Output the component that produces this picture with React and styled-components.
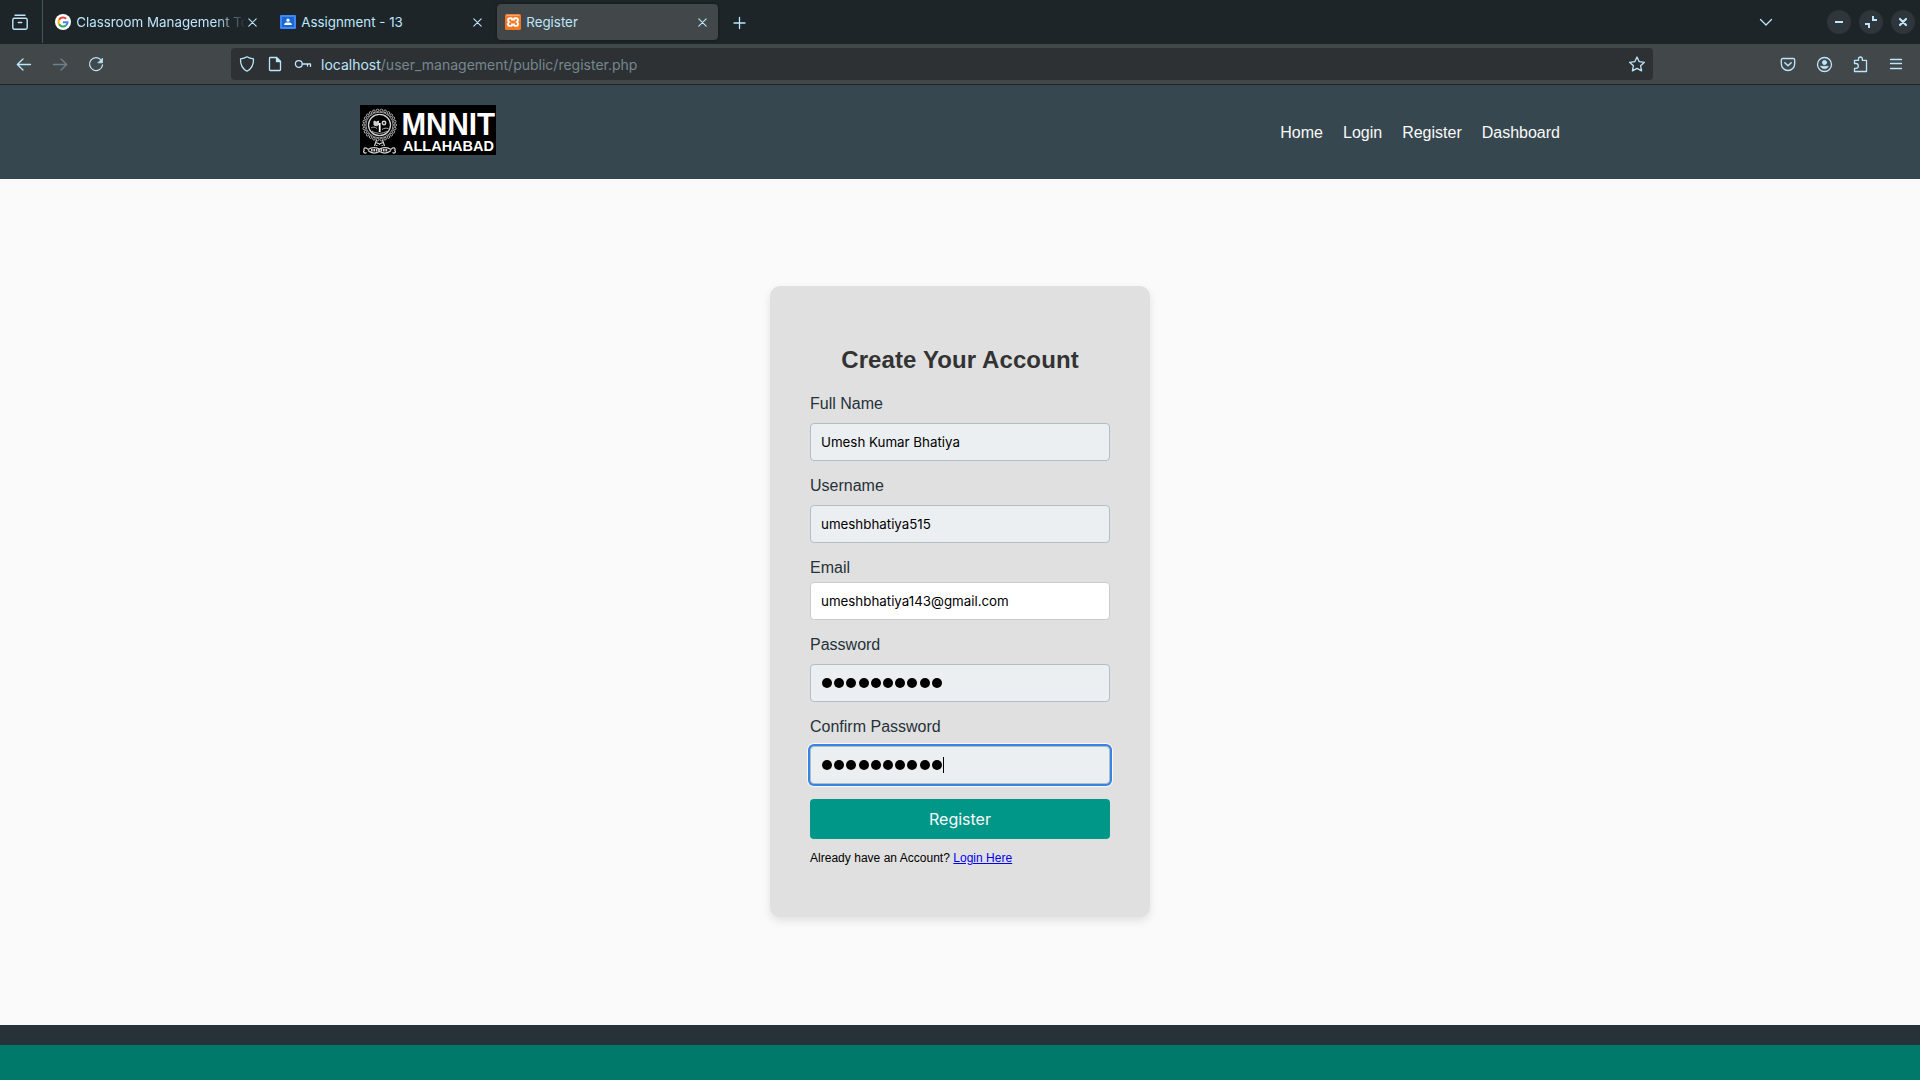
import React from "react";
import styled, { createGlobalStyle, css } from "styled-components";

const ICE = "#bde6fb";

const Global = createGlobalStyle`
  *, *::before, *::after { box-sizing: border-box; }
  html, body, #root { height: 100%; }
  body { margin: 0; overflow: hidden; background: #fafafa; font-family: "Liberation Sans", Arial, sans-serif; }
`;

const Window = styled.div`
  display: flex;
  flex-direction: column;
  width: 1920px;
  height: 1080px;
`;

const TabStrip = styled.div`
  display: flex;
  align-items: center;
  height: 44px;
  flex: none;
  background: #1e2529;
  font-family: Inter, sans-serif;
`;
const ViewButton = styled.div`
  display: flex;
  align-items: center;
  width: 43px;
  height: 43px;
  margin-bottom: 1px;
  padding-left: 12px;
  border-right: 1px solid #43555e;
`;
const Tabs = styled.div`
  display: flex;
  gap: 4px;
  margin-left: 4px;
`;
const Tab = styled.div`
  display: flex;
  align-items: center;
  width: 221px;
  height: 36px;
  padding: 0 11.5px 0 8px;
  border-radius: 4px;
  background: ${(p) => (p.$active ? "#42474a" : "transparent")};
  box-shadow: ${(p) => (p.$active ? "0 0 3px rgba(0,0,0,.5)" : "none")};
`;
const TabTitle = styled.span`
  flex: 1;
  min-width: 0;
  margin-left: 5.3px;
  white-space: nowrap;
  font-size: 13.33px;
  line-height: 20px;
  color: ${ICE};
  ${(p) =>
    p.$fade &&
    css`
      mask-image: linear-gradient(to left, transparent 2px, #000 32px);
    `}
`;
const NewTab = styled.div`
  display: flex;
  margin-left: 13px;
  padding-top: 1px;
`;
const WindowControls = styled.div`
  display: flex;
  align-items: center;
  gap: 8px;
  margin-left: auto;
  padding-right: 5px;
`;
const TabList = styled.div`
  display: flex;
  margin-right: 45px;
`;
const RoundButton = styled.div`
  display: grid;
  place-items: center;
  width: 24px;
  height: 24px;
  border-radius: 50%;
  background: #2e353b;
`;

const Toolbar = styled.div`
  display: flex;
  align-items: center;
  flex: none;
  height: 41px;
  padding: 0 14px;
  background: #42474a;
  border-bottom: 1px solid #1e2529;
`;
const NavButtons = styled.div`
  display: flex;
  gap: 16px;
  width: 217px;
`;
const UrlBar = styled.div`
  display: flex;
  align-items: center;
  width: 1422px;
  height: 32px;
  padding: 0 6px;
  gap: 8px;
  border-radius: 4px;
  background: #2d3134;
`;
const Url = styled.div`
  flex: 1;
  padding-top: 1px;
  font: 14px/20px Inter, sans-serif;
  color: #77878f;
`;
const Host = styled.span`
  color: ${ICE};
`;
const ToolButtons = styled.div`
  display: flex;
  gap: 16px;
  margin-left: auto;
`;

const Header = styled.header`
  flex: none;
  height: 94px;
  padding: 20px 0;
  background: #37474f;
`;
const HeaderInner = styled.div`
  display: flex;
  justify-content: space-between;
  width: 1200px;
  height: 54px;
  margin: 0 auto;
`;
const Menu = styled.nav`
  display: flex;
  align-items: center;
  gap: 20px;
  padding-top: 2px;
`;
const MenuLink = styled.a`
  font-size: 16px;
  line-height: 18px;
  color: #fafafa;
`;

const Main = styled.main`
  display: flex;
  flex: 1;
  align-items: flex-start;
  justify-content: center;
  padding-top: 107px;
  background: #fafafa;
`;
const Card = styled.section`
  width: 380px;
  height: 631px;
  padding: 40px;
  border-radius: 10px;
  background: #e0e0e0;
  box-shadow: 0 4px 8px rgba(0, 0, 0, 0.1);
`;
const Title = styled.h2`
  margin: 20px 0 22px;
  font-size: 24px;
  line-height: 27px;
  letter-spacing: 0.1px;
  text-align: center;
  color: #333;
`;
const Field = styled.div`
  margin-bottom: ${(p) => (p.$last ? 15 : 16)}px;
`;
const Label = styled.label`
  display: block;
  margin-bottom: ${(p) => (p.$tight ? 5 : 10)}px;
  font-size: 16px;
  line-height: 18px;
  color: #263238;
`;
const Input = styled.div`
  display: flex;
  align-items: center;
  height: 38px;
  padding: 0 10px;
  border: 1px solid ${(p) => (p.$plain ? "#ccc" : "#b0bec5")};
  border-radius: 4px;
  background: ${(p) => (p.$plain ? "#fff" : "#eceff1")};
  font: 13.33px/16px Inter, sans-serif;
  color: #000;
  ${(p) =>
    p.$focused &&
    css`
      box-shadow: 0 0 0 2px #3584e4, 0 0 0 3px rgba(255, 255, 255, 0.8);
    `}
`;
const Dots = styled.div`
  display: flex;
  gap: 2.19px;
  padding-left: 1px;
`;
const Dot = styled.i`
  width: 10px;
  height: 10px;
  border-radius: 50%;
  background: #000;
`;
const Caret = styled.i`
  width: 1px;
  height: 16px;
  margin-left: 1.3px;
  background: #000;
`;
const Submit = styled.button`
  display: block;
  width: 100%;
  height: 40px;
  padding: 0;
  border: 0;
  border-radius: 4px;
  background: #009688;
  font: 16px/20px Inter, sans-serif;
  color: #fafafa;
`;
const Hint = styled.p`
  margin: 12px 0 0;
  font-size: 12px;
  line-height: 14px;
  letter-spacing: 0.02px;
  color: #000;
`;
const HintLink = styled.a`
  color: #0000ee;
  text-decoration: underline;
`;
const FooterTop = styled.div`
  flex: none;
  height: 20px;
  background: #263238;
`;
const FooterBar = styled.footer`
  flex: none;
  height: 35px;
  background: #00796b;
`;

const IconSvg = styled.svg`
  flex: none;
  fill: none;
  stroke-linecap: round;
  stroke-linejoin: round;
`;
const Icon = ({ size = 20, w = 1.3, color = ICE, children }) => (
  <IconSvg width={size} height={size} viewBox={`0 0 ${size} ${size}`} stroke={color} strokeWidth={w}>
    {children}
  </IconSvg>
);

const ArchiveIcon = () => (
  <Icon size={16} w={1.4}>
    <path d="M3 1.2h10" />
    <rect x=".8" y="4.3" width="14.4" height="10.9" rx="1.6" />
    <path d="M6.3 8.5h3.4" />
  </Icon>
);
const CloseIcon = () => (
  <Icon size={9} w={1.1}>
    <path d="M.8.8l7.4 7.4M8.2.8.8 8.2" />
  </Icon>
);
const GoogleIcon = () => (
  <svg width="16" height="16" viewBox="0 0 16 16" fill="none" strokeWidth="2.1">
    <circle cx="8" cy="8" r="8" fill="#fff" />
    <path d="M4.1 5.75A4.5 4.5 0 0 1 11.2 4.8" stroke="#ea4335" />
    <path d="M4.1 5.75A4.5 4.5 0 0 0 4.1 10.25" stroke="#fbbc05" />
    <path d="M4.1 10.25A4.5 4.5 0 0 0 10.9 11.45" stroke="#34a853" />
    <path d="M10.9 11.45A4.5 4.5 0 0 0 12.5 8.2H8" stroke="#4285f4" />
  </svg>
);
const ClassroomIcon = () => (
  <svg width="16" height="16" viewBox="0 0 16 16">
    <rect y="1" width="16" height="14" rx="1" fill="#4285f4" />
    <rect x="2" y="3" width="12" height="10" fill="#1967d2" />
    <circle cx="8" cy="6.2" r="1.6" fill="#fff" />
    <path d="M4.2 11V10.3C4.2 8.9 6 8.5 8 8.5s3.8.4 3.8 1.8V11z" fill="#fff" />
  </svg>
);
const XamppIcon = () => (
  <svg width="16" height="16" viewBox="0 0 16 16" fill="none">
    <rect width="16" height="16" rx="1.5" fill="#f37623" />
    <path d="M1.5 1.3h13" stroke="#f9b384" strokeWidth="1" />
    <path
      d="M5 4.2c-1.3 0-2 .8-2 1.9 0 1 .5 1.5 1.1 1.9C3.4 8.4 3 9 3 10c0 1.2.8 1.9 2 1.9h1.2c.5 0 .8-.3.8-.8v-.6h2v.6c0 .5.3.8.8.8H11c1.2 0 2-.7 2-1.9 0-1-.4-1.6-1.1-2 .6-.4 1.1-.9 1.1-1.900 0-1.100-.7-1.900-2-1.900H9.800c-.5 0-.8.3-.8.8v.6H7V5c0-.5-.3-.8-.8-.8z"
      stroke="#fff"
      strokeWidth="1.9"
    />
  </svg>
);

const teeth = Array.from({ length: 26 }, (_, i) => {
  const a = (i * Math.PI) / 13;
  return [19.5 + 15.7 * Math.cos(a), 20 + 14.7 * Math.sin(a)];
});

const Logo = () => (
  <svg width="136" height="50" viewBox="0 0 136 50">
    <rect width="136" height="50" fill="#000" />
    <g fill="none" stroke="#d2d2d2">
      {teeth.map(([x, y], i) => (
        <circle key={i} cx={x} cy={y} r="1.3" strokeWidth=".8" />
      ))}
      <ellipse cx="19.5" cy="20" rx="13.6" ry="12.8" strokeWidth=".7" />
      <ellipse cx="19.5" cy="20" rx="11" ry="10.6" strokeWidth="1.3" />
      <path d="M11 23c2-1.500 4-1 6 .5M22 24.500c2-1.500 4-1.500 6.500-1M12 26c4 3 11 3 15 0" strokeWidth=".8" />
      <path d="M19.700 18v9" strokeWidth="1.800" stroke="#fff" />
      <path d="M14 16l2.300 1 2.200-1v4l-2.200.8L14 20z" fill="#cfcfcf" />
      <circle cx="24" cy="18" r="1.700" strokeWidth="1.500" />
      <path d="M16.500 35l-2 6M22.500 35l2 6M16 37.500l7 3M23 37.500l-7 3" strokeWidth="1.200" />
      <path d="M8 44.500c4-3 7-2.500 11.500-.5 4.500-2 7.500-2.500 11.500.5M8 45.500c4 3.500 8 3 11.500 1 3.500 2 7.500 2.500 11.500-1" strokeWidth="1.200" />
      <path d="M11 45.200h17" strokeWidth="2.600" strokeDasharray="1.600 .8" />
      <path d="M8 44.500c-2-3-5-1.500-3.800 1-1.700 1.200.3 3.500 2.300 2M31 44.500c2-3 5-1.500 3.800 1 1.700 1.200-.3 3.500-2.300 2" strokeWidth="1.200" />
    </g>
    <g fill="#fff" fontFamily="Liberation Sans, Arial, sans-serif" fontWeight="700">
      <text x="41.500" y="30" fontSize="31" textLength="93.500" lengthAdjust="spacingAndGlyphs">MNNIT</text>
      <text x="43" y="46" fontSize="15.300" textLength="91" lengthAdjust="spacingAndGlyphs">ALLAHABAD</text>
    </g>
  </svg>
);

const tabs = [
  { title: "Classroom Management To", icon: <GoogleIcon />, fade: true },
  { title: "Assignment - 13", icon: <ClassroomIcon /> },
  { title: "Register", icon: <XamppIcon />, active: true },
];

const fields = [
  { label: "Full Name", value: "Umesh Kumar Bhatiya" },
  { label: "Username", value: "umeshbhatiya515" },
  { label: "Email", value: "umeshbhatiya143@gmail.com", plain: true },
  { label: "Password", secret: 10 },
  { label: "Confirm Password", secret: 10, focused: true },
];

export default function App() {
  return (
    <Window>
      <Global />
      <TabStrip>
        <ViewButton>
          <ArchiveIcon />
        </ViewButton>
        <Tabs>
          {tabs.map((t) => (
            <Tab key={t.title} $active={t.active}>
              {t.icon}
              <TabTitle $fade={t.fade}>{t.title}</TabTitle>
              <CloseIcon />
            </Tab>
          ))}
        </Tabs>
        <NewTab>
          <Icon size={16}>
            <path d="M8.5 2.5v11M3 8h11" />
          </Icon>
        </NewTab>
        <WindowControls>
          <TabList>
            <Icon size={16}>
              <path d="M2.5 5.5 8 11l5.5-5.5" />
            </Icon>
          </TabList>
          <RoundButton>
            <Icon size={12} w={2}>
              <path d="M2 6h8" strokeLinecap="butt" />
            </Icon>
          </RoundButton>
          <RoundButton>
            <Icon size={12} w={2}>
              <path d="M8 0v4h4M0 8h4v4" strokeLinecap="butt" strokeLinejoin="miter" />
            </Icon>
          </RoundButton>
          <RoundButton>
            <Icon size={12} w={2.2}>
              <path d="M3 3l6 6M9 3 3 9" />
            </Icon>
          </RoundButton>
        </WindowControls>
      </TabStrip>

      <Toolbar>
        <NavButtons>
          <Icon>
            <path d="M16.5 10.5h-13M9 5l-5.700 5.500L9 16" />
          </Icon>
          <Icon color="#6e828b">
            <path d="M3.5 10.5h13M11 5l5.700 5.500L11 16" />
          </Icon>
          <Icon>
            <path d="M15.5 6.5A6.500 6.500 0 1 0 16.500 11" />
            <path d="M16.5 4.5v4.300h-4.300z" fill={ICE} strokeWidth=".8" />
          </Icon>
        </NavButtons>
        <UrlBar>
          <Icon>
            <path d="M10 2.8c2 1.300 4.300 1.900 6.500 2.100.2 5.200-1.500 9.500-6.500 12.300C5 14.400 3.300 10.100 3.500 4.900 5.700 4.700 8 4.100 10 2.800z" />
          </Icon>
          <Icon>
            <path d="M5.3 3.500h6.200l4 4v8.200c0 .5-.3.8-.8.8H5.300c-.5 0-.8-.3-.8-.8V4.300c0-.5.3-.8.8-.8z" />
            <path d="M11.5 3.500v4h4z" fill={ICE} />
          </Icon>
          <Icon>
            <circle cx="5.800" cy="10" r="3.400" />
            <path d="M9.300 10h8.200v2.400M14.500 10v2" />
          </Icon>
          <Url>
            <Host>localhost</Host>/user_management/public/register.php
          </Url>
          <Icon>
            <path d="M10 3l2.200 4.700 5.200.6-3.800 3.500 1 5.100L10 14.400l-4.600 2.500 1-5.100-3.800-3.500 5.200-.6z" />
          </Icon>
        </UrlBar>
        <ToolButtons>
          <Icon>
            <path d="M4.800 4.500h10.400c.9 0 1.500.6 1.500 1.500v3.700c0 3.800-3 6.800-6.700 6.800s-6.700-3-6.700-6.800V6c0-.9.6-1.500 1.500-1.500z" />
            <path d="M6.800 8.700l3.200 3 3.200-3" strokeWidth="1.500" />
          </Icon>
          <Icon>
            <circle cx="10.5" cy="10.5" r="7" />
            <circle cx="10.5" cy="8.500" r="2.200" fill={ICE} strokeWidth=".5" />
            <path d="M6.700 12.300h7.600c-.3 1.500-1.800 2.500-3.800 2.500s-3.500-1-3.800-2.500z" fill={ICE} strokeWidth=".5" />
          </Icon>
          <Icon>
            <path d="M4.500 9.500V6.300h4V5c0-1.100.8-2 1.900-2s1.900.9 1.900 2v1.300h4.200v11.200h-12v-3.200H6c1.300 0 2.300-1 2.300-2.300S7.300 9.500 6 9.500z" />
          </Icon>
          <Icon>
            <path d="M4.500 5.500h11M4.500 9.500h11M4.500 14.500h11" />
          </Icon>
        </ToolButtons>
      </Toolbar>

      <Header>
        <HeaderInner>
          <Logo />
          <Menu>
            {["Home", "Login", "Register", "Dashboard"].map((m) => (
              <MenuLink key={m}>{m}</MenuLink>
            ))}
          </Menu>
        </HeaderInner>
      </Header>

      <Main>
        <Card>
          <Title>Create Your Account</Title>
          {fields.map((f, index) => (
            <Field key={f.label} $last={index === fields.length - 1}>
              <Label $tight={f.plain}>{f.label}</Label>
              <Input $plain={f.plain} $focused={f.focused}>
                {f.value}
                {f.secret && (
                  <Dots>
                    {Array.from({ length: f.secret }, (_, i) => (
                      <Dot key={i} />
                    ))}
                  </Dots>
                )}
                {f.focused && <Caret />}
              </Input>
            </Field>
          ))}
          <Submit>Register</Submit>
          <Hint>
            Already have an Account? <HintLink>Login Here</HintLink>
          </Hint>
        </Card>
      </Main>
      <FooterTop />
      <FooterBar />
    </Window>
  );
}
